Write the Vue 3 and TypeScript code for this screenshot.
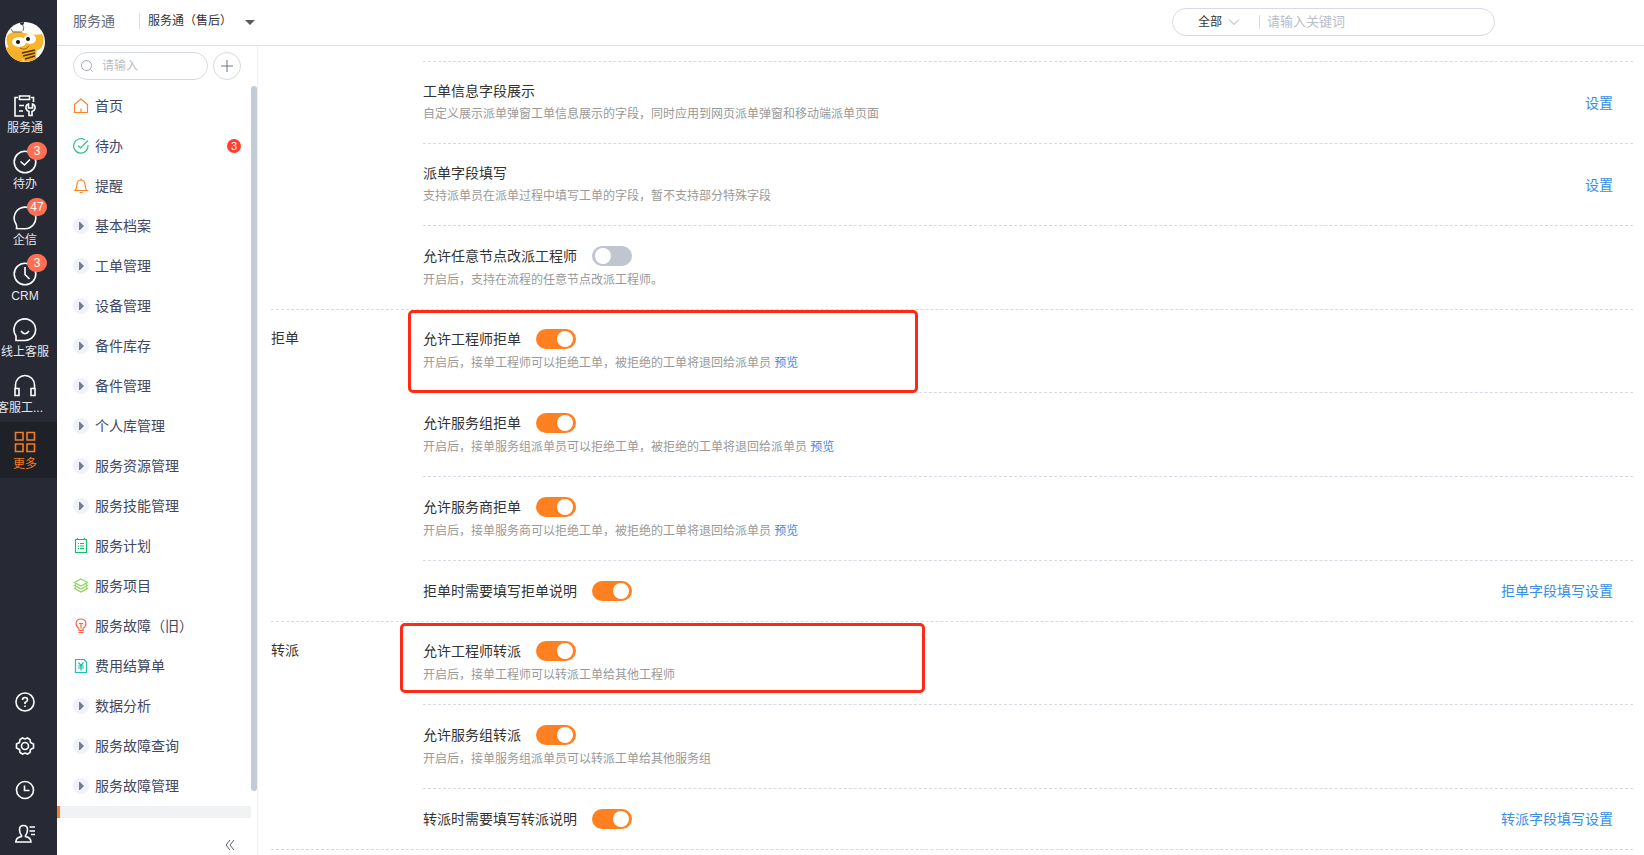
<script setup lang="ts">
import { reactive } from 'vue'

interface RailItem { icon: string; label: string; badge?: string; active?: boolean; clipped?: boolean }
interface NavItem { icon: string; label: string; badge?: string }
interface Row {
  id: string
  title: string
  desc?: string
  on?: boolean
  preview?: boolean
  action?: string
  mark?: string
}
interface Group { label: string; rows: Row[] }

const rail: RailItem[] = [
  { icon: 'service', label: '服务通' },
  { icon: 'todo', label: '待办', badge: '3' },
  { icon: 'chat', label: '企信', badge: '47' },
  { icon: 'clock', label: 'CRM', badge: '3' },
  { icon: 'smile', label: '线上客服' },
  { icon: 'headset', label: '客服工...', clipped: true },
  { icon: 'grid', label: '更多', active: true },
]

const tools = [
  { icon: 'help', label: '帮助' },
  { icon: 'gear', label: '设置' },
  { icon: 'history', label: '历史' },
  { icon: 'contacts', label: '通讯录' },
]

const nav: NavItem[] = [
  { icon: 'home', label: '首页' },
  { icon: 'check', label: '待办', badge: '3' },
  { icon: 'bell', label: '提醒' },
  { icon: 'fold', label: '基本档案' },
  { icon: 'fold', label: '工单管理' },
  { icon: 'fold', label: '设备管理' },
  { icon: 'fold', label: '备件库存' },
  { icon: 'fold', label: '备件管理' },
  { icon: 'fold', label: '个人库管理' },
  { icon: 'fold', label: '服务资源管理' },
  { icon: 'fold', label: '服务技能管理' },
  { icon: 'plan', label: '服务计划' },
  { icon: 'layers', label: '服务项目' },
  { icon: 'bulb', label: '服务故障（旧）' },
  { icon: 'bill', label: '费用结算单' },
  { icon: 'fold', label: '数据分析' },
  { icon: 'fold', label: '服务故障查询' },
  { icon: 'fold', label: '服务故障管理' },
]

const groups = reactive<Group[]>([
  {
    label: '',
    rows: [
      { id: 'info', title: '工单信息字段展示', desc: '自定义展示派单弹窗工单信息展示的字段，同时应用到网页派单弹窗和移动端派单页面', action: '设置' },
      { id: 'fill', title: '派单字段填写', desc: '支持派单员在派单过程中填写工单的字段，暂不支持部分特殊字段', action: '设置' },
      { id: 'reassign', title: '允许任意节点改派工程师', desc: '开启后，支持在流程的任意节点改派工程师。', on: false },
    ],
  },
  {
    label: '拒单',
    rows: [
      { id: 'rej-eng', title: '允许工程师拒单', desc: '开启后，接单工程师可以拒绝工单，被拒绝的工单将退回给派单员', on: true, preview: true, mark: 'mark-reject' },
      { id: 'rej-group', title: '允许服务组拒单', desc: '开启后，接单服务组派单员可以拒绝工单，被拒绝的工单将退回给派单员', on: true, preview: true },
      { id: 'rej-vendor', title: '允许服务商拒单', desc: '开启后，接单服务商可以拒绝工单，被拒绝的工单将退回给派单员', on: true, preview: true },
      { id: 'rej-note', title: '拒单时需要填写拒单说明', on: true, action: '拒单字段填写设置' },
    ],
  },
  {
    label: '转派',
    rows: [
      { id: 'tr-eng', title: '允许工程师转派', desc: '开启后，接单工程师可以转派工单给其他工程师', on: true, mark: 'mark-transfer' },
      { id: 'tr-group', title: '允许服务组转派', desc: '开启后，接单服务组派单员可以转派工单给其他服务组', on: true },
      { id: 'tr-note', title: '转派时需要填写转派说明', on: true, action: '转派字段填写设置' },
    ],
  },
])
</script>

<template>
  <div class="app">
    <aside class="rail">
      <svg class="logo" viewBox="0 0 40 40" aria-hidden="true">
        <defs><clipPath id="logo-clip"><circle cx="20" cy="20" r="20" /></clipPath></defs>
        <g clip-path="url(#logo-clip)">
          <rect width="40" height="40" fill="#fdfcf8" />
          <path d="M4 25Q10 29 16 28L18 40H6Q1 33 0 26Z" fill="#f4b02a" />
          <path d="M14 24L32 22L31 38L20 40L15 33Z" fill="#f7ab1e" />
          <path d="M2 14Q7 8 15 10Q28 14 37 12Q40 17 37 25Q34 29 27 29Q17 31 6 28Q0 22 2 14Z" fill="#fab52a" />
          <path d="M17 10Q13 10 8 10L6 7M18 9Q20 5 17 2" stroke="#6b6e74" fill="none" />
          <circle cx="17" cy="1" r="2" fill="#292a2d" />
          <ellipse cx="14" cy="20" rx="7" ry="5" fill="#fff" />
          <ellipse cx="25" cy="17" rx="6" ry="5" fill="#fff" />
          <circle cx="13" cy="20" r="2" fill="#17120e" />
          <circle cx="23" cy="17" r="2" fill="#17120e" />
          <path d="M15 26Q20 29 24 24" stroke="#a45c14" fill="none" />
          <path d="M17 31L30 28M18 34L30 31M20 37L30 34" stroke="#4b3210" stroke-width="1.500" />
        </g>
      </svg>
      <nav class="rail-nav">
        <button v-for="r in rail" :key="r.label" type="button" class="rail-item" :class="{ active: r.active }">
          <svg class="rail-icon" viewBox="0 0 24 24" aria-hidden="true">
            <template v-if="r.icon === 'service'">
              <path d="M5 3.500H2V22H11M18 3.500H20.500V8M6.500 2H16.500V5.500H6.500ZM6 11.500H11M6 17H10" />
              <path d="M15.500 10Q12.500 11 13 14.500Q13.500 16.500 16 17.500V21.500H19V17.500Q21.500 16.500 22 14.500Q22.500 11 19.500 10V14H15.500Z" />
            </template>
            <template v-else-if="r.icon === 'todo'"><circle cx="12" cy="12" r="10.800" /><path d="M7.500 11.500L11.500 15L17 9.500" /></template>
            <path v-else-if="r.icon === 'chat'" d="M3.500 22.500Q4 20 3 18A10.800 10.800 0 1 1 12 22.800Z" />
            <template v-else-if="r.icon === 'clock'"><circle cx="12" cy="12" r="10.800" /><path d="M12 5V12.500L16.500 17" /></template>
            <template v-else-if="r.icon === 'smile'"><path d="M3 22.500V18A10.800 10.800 0 1 1 12 22.500Z" /><path d="M8 13Q12 18.500 16 13" /></template>
            <path v-else-if="r.icon === 'headset'" d="M2.500 15V11A9.500 9.500 0 0 1 21.500 11V15M2 14.500H6V21.500H2ZM18 14.500H22V21.500H18Z" />
            <path v-else d="M2.500 2.500H10V10H2.500ZM14 2.500H21.500V10H14ZM2.500 14H10V21.500H2.500ZM14 14H21.500V21.500H14Z" />
          </svg>
          <span class="rail-label" :class="{ clipped: r.clipped }">{{ r.label }}</span>
          <span v-if="r.badge" class="rail-badge">{{ r.badge }}</span>
        </button>
      </nav>
      <div class="rail-tools">
        <button v-for="t in tools" :key="t.icon" type="button" class="tool" :aria-label="t.label">
          <svg viewBox="0 0 20 20" aria-hidden="true">
            <template v-if="t.icon === 'help'"><circle cx="10" cy="10" r="9" /><path d="M7.500 8Q7.500 5.500 10 5.500T12.500 8Q12.500 9.500 10 10.500V12M10 13.500V15" /></template>
            <template v-else-if="t.icon === 'gear'">
              <path d="M7.500 2L10 3L12.500 2L15 3.500L15.500 6.500L18.500 8V12L15.500 13.500L15 16.500L12.500 18L10 17L7.500 18L5 16.500L4.500 13.500L1.500 12V8L4.500 6.500L5 3.500Z" /><circle cx="10" cy="10" r="3.500" />
            </template>
            <template v-else-if="t.icon === 'history'"><circle cx="10" cy="10" r="8.500" /><path d="M9.500 5.500V10.500H14.500" /></template>
            <path v-else d="M8.500 1.500Q4.500 1.500 4.500 5.500Q4.500 9.500 6.500 11.500V12.500Q1 13.500 0.800 18H16Q15.800 13.500 10.500 12.500V11.500Q12.500 9.500 12.500 5.500Q12.500 1.500 8.500 1.500ZM14.500 3H20M14.500 7H20M16 10.500H20" />
          </svg>
        </button>
      </div>
    </aside>

    <div class="page">
      <header class="topbar">
        <span class="brand">服务通</span>
        <button type="button" class="module">服务通（售后）<i class="caret"></i></button>
        <div class="global-search">
          <select class="scope" aria-label="搜索范围"><option>全部</option></select>
          <svg class="chevron" viewBox="0 0 12 12" aria-hidden="true"><path d="M1 3.500L6 8.500L11 3.500" /></svg>
          <input class="keyword" type="text" aria-label="关键词" placeholder="请输入关键词" />
        </div>
      </header>

      <div class="body">
        <aside class="sidebar">
          <div class="side-search">
            <label class="side-box">
              <svg viewBox="0 0 12 12" aria-hidden="true"><circle cx="5.500" cy="5.500" r="5" /><path d="M9.500 9.500L11.500 11.500" /></svg>
              <input type="text" aria-label="搜索菜单" placeholder="请输入" />
            </label>
            <button type="button" class="add" aria-label="新增">
              <svg viewBox="0 0 14 14" aria-hidden="true"><path d="M7 1V13M1 7H13" /></svg>
            </button>
          </div>
          <div class="side-scroll">
            <nav class="side-nav">
              <a v-for="n in nav" :key="n.label" href="#" class="side-item">
                <svg class="side-icon" :class="n.icon" viewBox="0 0 16 16" aria-hidden="true">
                  <path v-if="n.icon === 'home'" d="M1.500 6.500L8 1L14.500 6.500V14.500H1.500ZM8 10.500V14.500" />
                  <path v-else-if="n.icon === 'check'" d="M12 2A7.200 7.200 0 1 0 15 7M5 7.500L7.500 10L15 2.500" />
                  <path v-else-if="n.icon === 'bell'" d="M8 0.500V2M2 12.500H14C12 11 12.500 9 12 6Q11.500 2 8 2T4 6C3.500 9 4 11 2 12.500ZM6.500 14.500H9.500" />
                  <template v-else-if="n.icon === 'fold'"><circle cx="8" cy="8" r="8" fill="#f0f2fa" stroke="none" /><path d="M6 4H7L11 8L7 12H6Z" fill="#737c8c" stroke="none" /></template>
                  <path v-else-if="n.icon === 'plan'" d="M2.500 1.500H13.500V14.500H2.500ZM4.500 0V1.500M11.500 0V1.500M5 5.500H6M7 5.500H11M5 8H6M7 8H11M5 10.500H6M7 10.500H11" />
                  <path v-else-if="n.icon === 'layers'" d="M8 1L14.500 4.500L8 8L1.500 4.500ZM3 6.500L1.500 7.500L8 11L14.500 7.500L13 6.500M3 9.500L1.500 10.500L8 14L14.500 10.500L13 9.500" />
                  <path v-else-if="n.icon === 'bulb'" d="M6 10.500Q3 8.500 3 5.500Q3.500 1 8 1T13 5.500Q13 8.500 10 10.500V12.500H6ZM6 5.500H10M8 5.500V10.500M5.500 14.500H10.500" />
                  <template v-else><path d="M2.500 1.500H11L13.500 4V14.500H2.500Z" /><path d="M5.500 4.500L8 7.500L10.500 4.500M5 8H11M5 10H11M8 7.500V12.500" /></template>
                </svg>
                <span>{{ n.label }}</span>
                <em v-if="n.badge" class="side-badge">{{ n.badge }}</em>
              </a>
            </nav>
            <div class="scroll-thumb"></div>
          </div>
          <div class="side-current"></div>
          <div class="side-foot">
            <button type="button" class="collapse" aria-label="收起菜单">
              <svg viewBox="0 0 10 12" aria-hidden="true"><path d="M5 1L1 6L5 11M9 1L5 6L9 11" /></svg>
            </button>
          </div>
        </aside>

        <main class="content">
          <section v-for="g in groups" :key="g.label" class="group">
            <h2 class="group-label">{{ g.label }}</h2>
            <div class="rows">
              <div v-for="row in g.rows" :key="row.id" class="row" :class="{ compact: !row.desc }">
                <div class="info">
                  <div class="head">
                    <label :for="row.on === undefined ? undefined : row.id">{{ row.title }}</label>
                    <input v-if="row.on !== undefined" :id="row.id" v-model="row.on" class="switch" type="checkbox" role="switch" />
                  </div>
                  <p v-if="row.desc" class="desc">{{ row.desc }} <a v-if="row.preview" href="#">预览</a></p>
                </div>
                <a v-if="row.action" href="#" class="action">{{ row.action }}</a>
                <div v-if="row.mark" class="mark" :class="row.mark"></div>
              </div>
            </div>
          </section>
        </main>
      </div>
    </div>
  </div>
</template>

<style>
body { margin: 0; }
</style>

<style scoped>
* { box-sizing: border-box; }
.app {
  display: flex;
  height: 100vh;
  overflow: hidden;
  background: #fff;
  color: #333;
  font: 14px/20px "Liberation Sans", "Noto Sans CJK SC", sans-serif;
}
button, input, select { font: inherit; color: inherit; border: 0; padding: 0; background: none; outline: 0; }
button { cursor: pointer; }
a { color: #368de7; text-decoration: none; }
svg { display: block; fill: none; stroke: currentColor; }

.rail { display: flex; flex-direction: column; flex: none; width: 57px; background: #272a35; color: #fff; overflow: hidden; }
.logo { flex: none; width: 40px; height: 40px; margin: 22px 0 24px 5px; stroke: none; }
.rail-item { position: relative; display: flex; flex-direction: column; align-items: center; width: 100%; height: 56px; padding: 8px 7px 0 0; }
.rail-item.active { background: #1f2129; color: #f57c1f; }
.rail-icon { flex: none; width: 24px; height: 24px; stroke-width: 1.6; }
.rail-label { flex: none; width: 56px; margin-top: 1px; font-size: 12px; line-height: 18px; text-align: center; white-space: nowrap; color: #e4e5e8; }
.active .rail-label { color: inherit; }
.rail-label.clipped { text-align: left; }
.rail-badge { position: absolute; top: 0; left: 27px; min-width: 20px; height: 18px; border-radius: 9px; background: #ff7052; color: #fff; font-size: 12px; line-height: 18px; text-align: center; }
.rail-tools { margin-top: auto; }
.tool { display: flex; align-items: center; width: 100%; height: 44px; padding: 1px 0 0 15px; }
.tool svg { width: 20px; height: 20px; stroke-width: 1.6; }

.page { display: flex; flex: 1; flex-direction: column; min-width: 0; }
.topbar { display: flex; flex: none; align-items: center; height: 46px; padding: 0 149px 3px 16px; border-bottom: 1px solid #dcdee5; }
.brand { padding-right: 24px; color: #666a78; }
.module { display: flex; align-items: center; height: 16px; padding-left: 8px; border-left: 1px solid #dcdee5; font-size: 12px; }
.caret { margin: 3px 0 0 13px; border: 5px solid transparent; border-top-color: #555960; border-bottom: 0; }
.global-search { display: flex; align-items: center; width: 323px; height: 28px; margin: 2px 0 0 auto; padding-left: 25px; border: 1px solid #d8dbe4; border-radius: 14px; }
.scope { appearance: none; width: 30px; font-size: 12px; line-height: 18px; }
.chevron { width: 12px; height: 12px; margin-right: 19px; color: #a4a9b8; }
.keyword { flex: 1; min-width: 0; height: 14px; padding-left: 7px; border-left: 1px solid #d8dbe4; font-size: 13px; }
::placeholder { color: #b9bdc9; opacity: 1; }

.body { display: flex; flex: 1; min-height: 0; }
.sidebar { display: flex; flex: none; flex-direction: column; width: 201px; border-right: 1px solid #eef0f3; }
.side-search { display: flex; flex: none; gap: 5px; padding: 6px 16px; }
.side-box { display: flex; align-items: center; gap: 9px; width: 135px; height: 28px; padding: 0 7px; border: 1px solid #d5d9e4; border-radius: 14px; color: #a4a9b8; }
.side-box svg { flex: none; width: 12px; height: 12px; }
.side-box input { width: 90px; font-size: 12px; line-height: 18px; }
.add { display: flex; align-items: center; justify-content: center; flex: none; width: 28px; height: 28px; border: 1px solid #d5d9e4; border-radius: 50%; color: #6c7484; }
.add svg { width: 14px; height: 14px; }
.side-scroll { display: flex; flex: 1; min-height: 0; overflow: hidden; }
.side-nav { flex: 1; }
.side-item { display: flex; align-items: center; height: 40px; padding: 0 10px 1px 16px; color: #42465f; }
.side-icon { width: 16px; height: 16px; margin-right: 6px; stroke-width: 1.2; }
.home, .bell { color: #ff8126; }
.check { color: #2fc287; }
.plan { color: #12c06c; }
.layers { color: #8fd158; }
.bulb { color: #ff6044; }
.bill { color: #20bdb5; }
.side-badge { width: 14px; height: 14px; margin-left: auto; border-radius: 50%; background: #ff3d30; color: #fff; font-size: 11px; font-style: normal; line-height: 14px; text-align: center; }
.scroll-thumb { width: 6px; height: 705px; border-radius: 3px; background: #c3ccd5; }
.side-current { flex: none; height: 12px; margin-right: 6px; border-left: 3px solid #ff8020; background: #f1f2f4; }
.side-foot { display: flex; flex: none; justify-content: flex-end; height: 37px; padding: 21px 22px 0 0; }
.collapse { width: 10px; height: 12px; color: #555a6c; }
.collapse svg { width: 10px; height: 12px; }

.content { flex: 1; min-width: 0; padding: 15px 11px 0 13px; overflow: hidden; }
.group { display: flex; border-bottom: 1px dashed #d6dae4; }
.group-label { flex: none; width: 152px; margin: 0; padding-top: 18px; font-size: 14px; font-weight: 400; line-height: 20px; }
.rows { flex: 1; min-width: 0; }
.row { position: relative; display: flex; align-items: center; justify-content: space-between; padding: 20px 20px 19px 0; border-bottom: 1px dashed #d6dae4; }
.row:first-child { padding-top: 19px; }
.row:last-child { border-bottom: 0; }
.group:first-child .row:first-child { padding-top: 20px; border-top: 1px dashed #d6dae4; }
.row.compact { padding-bottom: 20px; }
.head { display: flex; align-items: center; gap: 15px; line-height: 18px; }
.desc { margin: 4px 0 0; color: #999; font-size: 12px; line-height: 20px; }
.switch { appearance: none; width: 40px; height: 20px; margin: 0; padding: 2px 3px; border-radius: 10px; background: #c1c5cf; cursor: pointer; }
.switch::before { content: ""; display: block; width: 16px; height: 16px; border-radius: 50%; background: #fff; }
.switch:checked { background: #ff8020; }
.switch:checked::before { margin-left: auto; }
.mark { position: absolute; border: 3px solid #fc2a16; border-radius: 5px; pointer-events: none; }
.mark-reject { top: 0; left: -15px; width: 510px; height: 83px; }
.mark-transfer { top: 1px; left: -23px; width: 525px; height: 70px; }
</style>
